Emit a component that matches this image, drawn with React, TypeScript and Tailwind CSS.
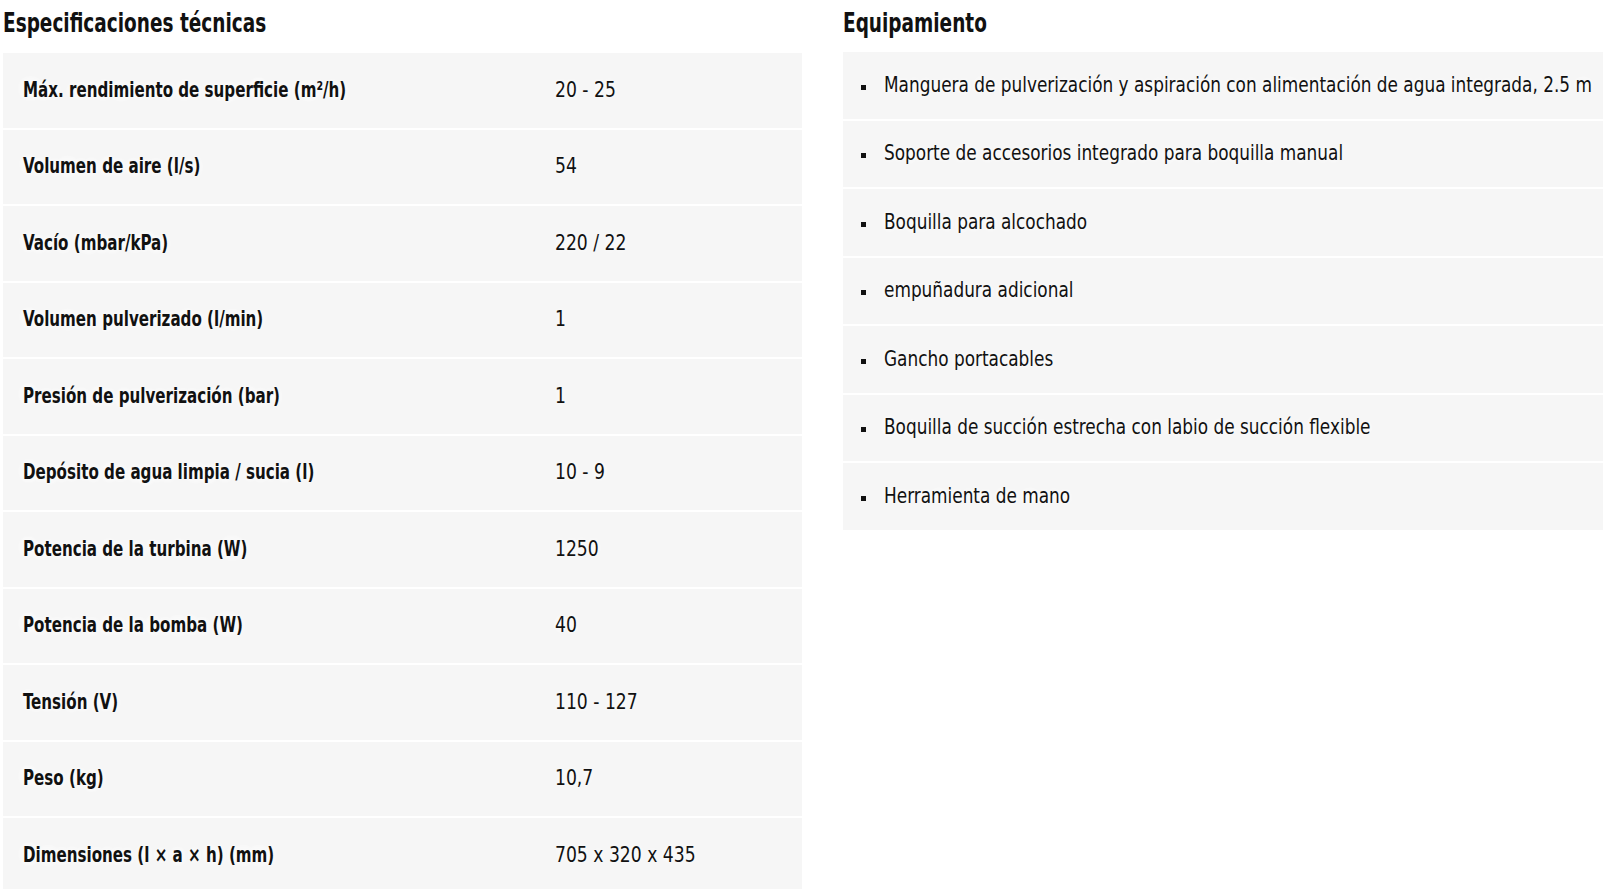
const specs: [string, string][] = [
  ["Máx. rendimiento de superficie (m²/h)", "20 - 25"],
  ["Volumen de aire (l/s)", "54"],
  ["Vacío (mbar/kPa)", "220 / 22"],
  ["Volumen pulverizado (l/min)", "1"],
  ["Presión de pulverización (bar)", "1"],
  ["Depósito de agua limpia / sucia (l)", "10 - 9"],
  ["Potencia de la turbina (W)", "1250"],
  ["Potencia de la bomba (W)", "40"],
  ["Tensión (V)", "110 - 127"],
  ["Peso (kg)", "10,7"],
  ["Dimensiones (l × a × h) (mm)", "705 x 320 x 435"],
];

const equipment = [
  "Manguera de pulverización y aspiración con alimentación de agua integrada, 2.5 m",
  "Soporte de accesorios integrado para boquilla manual",
  "Boquilla para alcochado",
  "empuñadura adicional",
  "Gancho portacables",
  "Boquilla de succión estrecha con labio de succión flexible",
  "Herramienta de mano",
];

const font = "font-['DejaVu_Sans_Condensed','DejaVu_Sans',sans-serif] [font-stretch:condensed]";
const glow = "[text-shadow:0_0_8px_#fff,0_0_14px_#fff,0_0_20px_#fff]";
// the reference face is much narrower than anything installed, so squeeze it
const boldText = `inline-block whitespace-nowrap origin-left scale-x-[0.8] font-bold ${glow}`;
const valueText = `inline-block whitespace-nowrap origin-left scale-x-[0.91] ${glow}`;
const itemText = `inline-block whitespace-nowrap origin-left scale-x-[0.895] ${glow}`;

export default function App() {
  return (
    <div className={`flex w-[1603px] h-[889px] overflow-hidden bg-white text-[#111] ${font}`}>
      <section className="w-[802px] pl-[3px] shrink-0">
        <h2 className="h-[53px] pt-[6px] text-[26px] leading-[34px]">
          <span className="inline-block whitespace-nowrap origin-left scale-x-[0.79] font-bold">
            Especificaciones técnicas
          </span>
        </h2>
        <div className="flex flex-col gap-[2px]">
          {specs.map(([label, value]) => (
            <div key={label} className="flex items-center h-[74.5px] bg-[#f6f6f6]">
              <div className="w-[552px] pl-[20px] text-[21px]">
                <span className={boldText}>{label}</span>
              </div>
              <div className="text-[21px]">
                <span className={valueText}>{value}</span>
              </div>
            </div>
          ))}
        </div>
      </section>
      <section className="flex-1 ml-[41px]">
        <h2 className="h-[52px] pt-[6px] text-[26px] leading-[34px]">
          <span className="inline-block whitespace-nowrap origin-left scale-x-[0.79] font-bold">
            Equipamiento
          </span>
        </h2>
        <ul className="flex flex-col gap-[2px]">
          {equipment.map((item) => (
            <li key={item} className="flex items-center h-[66.5px] bg-[#f6f6f6]">
              <span className="ml-[18px] mt-[4px] w-[5px] h-[5px] bg-[#111] shrink-0" />
              <span className="ml-[18px] text-[21px]">
                <span className={itemText}>{item}</span>
              </span>
            </li>
          ))}
        </ul>
      </section>
    </div>
  );
}
